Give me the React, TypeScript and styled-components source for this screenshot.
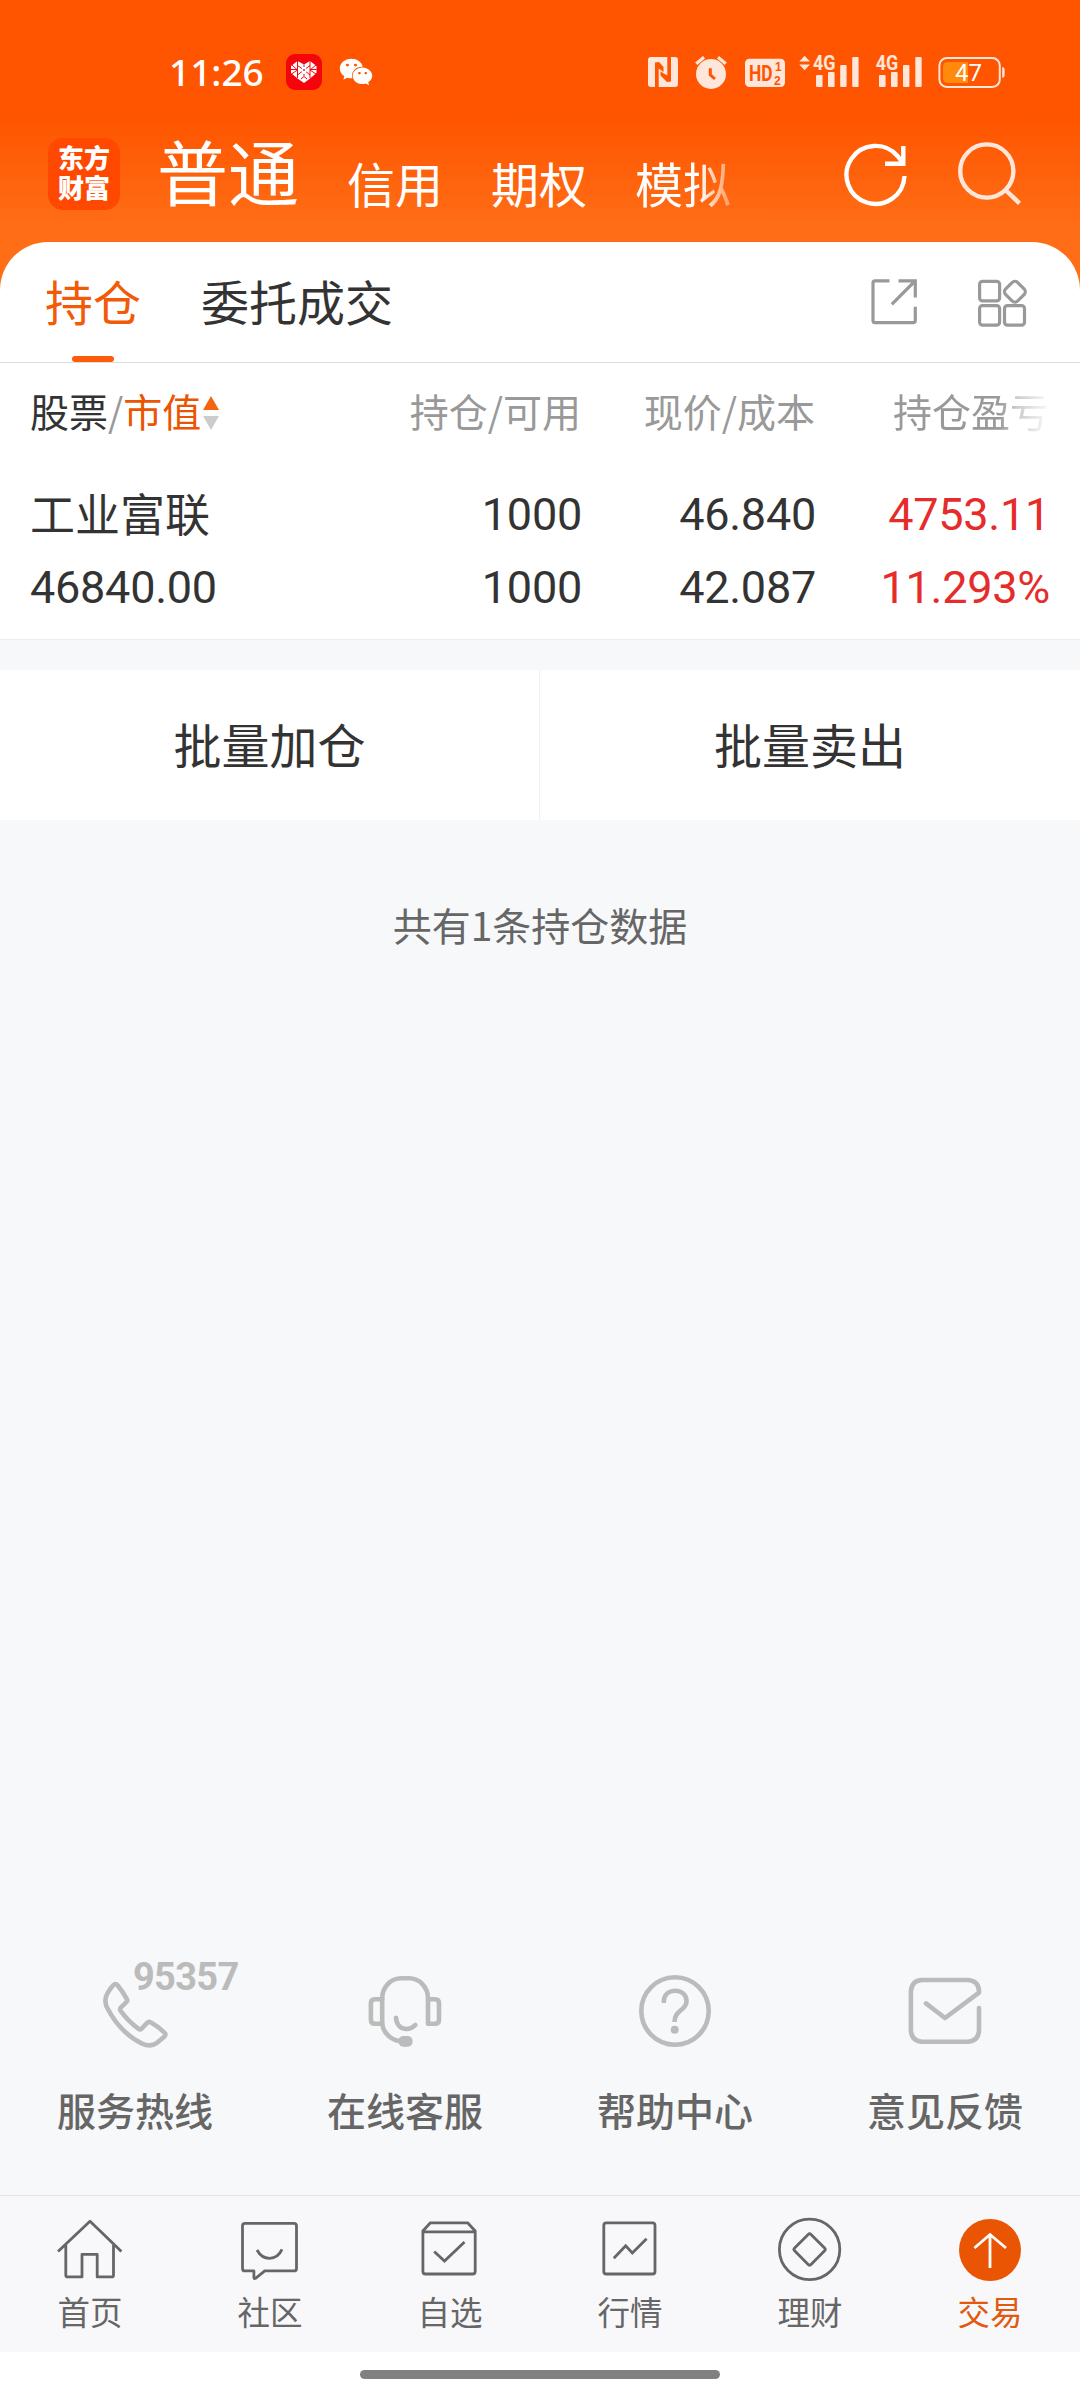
import React from "react";
import styled, { createGlobalStyle } from "styled-components";
import { FaWeixin } from "react-icons/fa";

const CJK = `"Noto Sans CJK SC", "Noto Sans", sans-serif`;
const LATIN = `Roboto, "Noto Sans CJK SC", sans-serif`;

const ORANGE = "#ea5504";
const PALE = "#ffe6da";

const GlobalStyle = createGlobalStyle`
  * { box-sizing: border-box; }
  body { margin: 0; background: #fff; }
  svg { display: block; flex: none; }
`;

const Screen = styled.div`
  width: 1080px;
  height: 2400px;
  overflow: hidden;
  display: flex;
  flex-direction: column;
  font-family: ${CJK};
  color: #333;
  background: linear-gradient(#ff5500 0, #ff5500 118px, #ff6d16 225px, #ff6d16 300px) 0 0 / 100% 300px no-repeat, #f7f8fa;
`;

/* ---------- status bar ---------- */

const StatusBar = styled.div`
  height: 120px;
  padding: 24px 75px 0 169px;
  display: flex;
  align-items: center;
`;

const Clock = styled.span`
  width: 117px;
  font: 500 37px/50px "Noto Sans", sans-serif;
  color: #fff;
`;

const StatusSpacer = styled.div`
  flex: 1;
`;

const WeChat = styled(FaWeixin)`
  width: 34px;
  height: 32px;
  margin-left: 17px;
  color: #fff;
`;

const ShopIcon = () => (
  <svg width="36" height="36" viewBox="0 0 36 36">
    <rect width="36" height="36" rx="9" fill="#f5040c" />
    <path d="M5 12 L11.5 7 L18 10.5 L24 7 L30.5 12 V19 L24 24.5 L18 29 L11.5 24.5 L5 19Z" fill="#fff" />
    <path
      d="M11.5 7V24 M24 7V24 M18 10.5V13 M18 20V22 M5 15.5H11.5 M24 15.5H30.5 M6 11L11.5 16L5.5 20 M30 11L24 16L30 20 M11.5 11.5L18 16L24 11.5 M11.5 21L18 16L24 21 M15 25L18 22.5L21 25"
      stroke="#f5040c"
      strokeWidth="1"
      fill="none"
    />
    <circle cx="18" cy="16" r="2.6" fill="#fff" />
    <circle cx="18" cy="16" r="0.9" fill="#f5040c" />
  </svg>
);

const StatusGlyphs = () => (
  <svg width="360" height="40" viewBox="645 52 360 40" fill={PALE}>
    <rect x="648" y="57" width="30" height="30" rx="3" />
    <path d="M655 87V62.5L659 62L663.5 67V72L658.7 68.5V87Z M671 57V81.5L667 82L660.5 75.5V71.5L667.3 75.5V57Z" fill="#ff5500" />

    <circle cx="711" cy="74" r="15" />
    <path d="M696.2 63.8L704 57.2 M725.8 63.8L718 57.2" stroke={PALE} strokeWidth="3.2" fill="none" />
    <path d="M710.3 68.3V74.8L715 79" stroke="#ff5500" strokeWidth="3" fill="none" />

    <rect x="745" y="58.7" width="40" height="28.3" rx="4.5" />
    <text x="749" y="81.3" fontFamily="Roboto, sans-serif" fontWeight="700" fontSize="22" textLength="23.5" lengthAdjust="spacingAndGlyphs" fill="#ff5500">HD</text>
    <text x="775" y="71" fontFamily="Liberation Sans, sans-serif" fontWeight="700" fontSize="12" fill="#ff5500">1</text>
    <text x="774" y="84.6" fontFamily="Liberation Sans, sans-serif" fontWeight="700" fontSize="12" fill="#ff5500">2</text>

    <path d="M799.3 61.5L804.6 55.7L810 61.5Z M799.3 64.5L804.6 70.3L810 64.5Z" />
    <text x="813" y="70.3" fontFamily="Roboto, sans-serif" fontWeight="700" fontSize="20" textLength="22.5" lengthAdjust="spacingAndGlyphs">4G</text>
    <rect x="816" y="75" width="6.6" height="12" rx="1" />
    <rect x="828" y="72" width="6.6" height="15" rx="1" />
    <rect x="840.2" y="65" width="6.4" height="22" rx="1" />
    <rect x="852.2" y="57" width="6.4" height="30" rx="1" />

    <text x="875.8" y="70.3" fontFamily="Roboto, sans-serif" fontWeight="700" fontSize="20" textLength="22.5" lengthAdjust="spacingAndGlyphs">4G</text>
    <rect x="879" y="75" width="6.6" height="12" rx="1" />
    <rect x="891" y="72" width="6.6" height="15" rx="1" />
    <rect x="903" y="65" width="6.4" height="22" rx="1" />
    <rect x="915.3" y="57" width="6.4" height="30" rx="1" />

    <rect x="939.4" y="58" width="60.4" height="29" rx="7.5" fill="none" stroke={PALE} strokeWidth="2" />
    <path d="M948 62H968V83H948Q943 83 943 78V67Q943 62 948 62Z" fill="#ff8a0c" />
    <path d="M1002.2 67Q1004.6 67 1004.6 69.5V75.2Q1004.6 77.7 1002.2 77.7Z" />
    <text x="955" y="81" fontFamily="Roboto, sans-serif" fontSize="24" fill="#fff">47</text>
  </svg>
);

/* ---------- title bar ---------- */

const TitleBar = styled.header`
  height: 122px;
  padding: 18px 48px 0;
  display: flex;
  align-items: flex-start;
`;

const Logo = styled.div`
  width: 72px;
  height: 72px;
  border-radius: 15px;
  background: #ff4800;
  color: #fff;
  font-weight: 900;
  font-size: 26px;
  line-height: 30px;
  padding: 4px 0 0 10px;
  white-space: pre-line;
`;

const Accounts = styled.nav`
  flex: 1;
  display: flex;
  align-items: flex-end;
  gap: 48px;
  height: 71px;
  margin-left: 37px;
  color: #fff;
  white-space: nowrap;
`;

const Account = styled.span<{ $active?: boolean; $fade?: boolean }>`
  font-size: ${(p) => (p.$active ? 71 : 48)}px;
  line-height: ${(p) => (p.$active ? 80 : 54)}px;
  ${(p) => p.$fade && "mask-image: linear-gradient(90deg, #000 66%, transparent 118%);"}
`;

const TitleActions = styled.div`
  display: flex;
  gap: 43px;
  padding-right: 8px;
`;

const RefreshIcon = () => (
  <svg width="70" height="72" viewBox="841 138 70 72" fill="none" stroke="#fff" strokeWidth="4.4">
    <path d="M904.5 176 A29 29 0 1 1 897.5 156 L903 163" />
    <path d="M885 163.8H903.3V146" />
  </svg>
);

const SearchIcon = () => (
  <svg width="70" height="72" viewBox="954 138 70 72" fill="none" stroke={PALE} strokeWidth="4.4">
    <circle cx="986.8" cy="171" r="26.6" />
    <path d="M1005.5 190L1019.5 203.3" />
  </svg>
);

/* ---------- holdings panel ---------- */

const Panel = styled.section`
  background: #fff;
  border-radius: 48px 48px 0 0;
  border-bottom: 1px solid #ececee;
  height: 398px;
`;

const TabRow = styled.div`
  height: 121px;
  padding: 0 45px;
  display: flex;
  align-items: flex-start;
  border-bottom: 1px solid #dedede;
`;

const Tab = styled.span<{ $active?: boolean }>`
  position: relative;
  height: 120px;
  margin-right: 60px;
  font-size: 48px;
  line-height: 117px;
  color: ${(p) => (p.$active ? "#f25a08" : "#333")};
  ${(p) =>
    p.$active &&
    `&::after {
      content: "";
      position: absolute;
      left: 27px;
      bottom: 0;
      width: 42px;
      height: 6px;
      border-radius: 3px;
      background: #ff5a0a;
    }`}
`;

const TabTools = styled.div`
  margin-left: auto;
  margin-right: 1px;
  display: flex;
  gap: 46px;
  padding-top: 30px;
`;

const ExportIcon = () => (
  <svg width="60" height="60" viewBox="0 0 60 60" fill="none" stroke="#999" strokeWidth="3.2">
    <path d="M25.5 8.8H11Q9 8.8 9 10.8V48.6Q9 50.6 11 50.6H49.3Q51.3 50.6 51.3 48.6V34.7" />
    <path d="M34.5 8.8H51.3V25.4 M27.8 32.4L51 9" />
  </svg>
);

const GridIcon = () => (
  <svg width="64" height="60" viewBox="0 0 64 60" fill="none" stroke="#999" strokeWidth="3.2">
    <rect x="9.6" y="9.3" width="20" height="19.6" rx="3" />
    <rect x="9.6" y="33.6" width="20" height="19.6" rx="3" />
    <rect x="34.5" y="33.6" width="20" height="19.6" rx="3" />
    <rect x="36.4" y="11.2" width="17" height="17" rx="4" transform="rotate(45 44.9 19.7)" />
  </svg>
);

const Holdings = styled.div`
  display: grid;
  grid-template-columns: 300px 252px 234px 234px;
  grid-template-rows: 96px;
  padding: 0 30px;
  text-align: right;
  white-space: nowrap;
`;

const HeadCell = styled.span<{ $fade?: boolean }>`
  padding-right: 1px;
  font-size: 39px;
  line-height: 94px;
  color: #999;
  ${(p) => p.$fade && "mask-image: linear-gradient(90deg, #000 78%, rgba(0,0,0,.5) 86%, transparent 101%);"}
`;

const SortCell = styled(HeadCell)`
  display: flex;
  align-items: flex-start;

  b { font-weight: 400; color: #333; }
  em { font-style: normal; color: ${ORANGE}; }
  svg { margin: 32px 0 0 1px; }
`;

const SortArrows = () => (
  <svg width="18" height="36" viewBox="0 0 18 36">
    <path d="M9 1L17 15H1Z" fill="#f56410" />
    <path d="M9 35L17 21H1Z" fill="#ccc" />
  </svg>
);

const StockCell = styled.div<{ $left?: boolean; $gain?: boolean }>`
  display: flex;
  flex-direction: column;
  padding-top: 19px;
  text-align: ${(p) => (p.$left ? "left" : "right")};
  font-family: ${LATIN};
  font-size: 45px;
  letter-spacing: -0.25px;
  line-height: 73px;
  color: ${(p) => (p.$gain ? "#e62b2b" : "#333")};
`;

const Name = styled.span`
  font-family: ${CJK};
  letter-spacing: 0;
  line-height: 69px;
  padding-bottom: 4px;
`;

const BatchRow = styled.div`
  margin-top: 30px;
  height: 150px;
  display: grid;
  grid-template-columns: 540px 540px;
  background: #fff;
`;

const BatchButton = styled.div`
  font-size: 48px;
  line-height: 147px;
  text-align: center;
  &:first-child { border-right: 1px solid #f0f0f2; }
`;

const Summary = styled.p`
  flex: 1;
  margin: 0;
  padding-top: 74px;
  font-size: 39px;
  line-height: 60px;
  text-align: center;
  color: #666;
`;

/* ---------- service shortcuts ---------- */

const Services = styled.div`
  display: grid;
  grid-template-columns: repeat(4, 1fr);
  height: 225px;
`;

const Service = styled.div`
  display: flex;
  flex-direction: column;
  align-items: center;
  font-size: 39px;
  font-weight: 500;
  line-height: 60px;
  color: #666;
`;

const ServiceIcon = styled.div`
  position: relative;
  margin-bottom: 29px;
`;

const HotlineNumber = styled.span`
  position: absolute;
  left: 38px;
  top: -13px;
  font: 700 38px/40px Roboto, sans-serif;
  letter-spacing: -0.7px;
  color: #bbb;
`;

const ServiceSvg = ({ children }: { children: React.ReactNode }) => (
  <svg width="80" height="80" viewBox="0 0 80 80" fill="none" stroke="#bbb" strokeWidth="4.6" strokeLinecap="round" strokeLinejoin="round">
    {children}
  </svg>
);

const services = [
  {
    label: "服务热线",
    badge: "95357",
    art: (
      <path d="M18.2 15.3Q20.4 12.8 22.6 15.3Q28 22 32 29.3Q32.6 30.8 31.6 31.8L26 37.3Q24.4 39 25.6 40.8Q33.5 51.5 43.6 58.8Q45.2 60 46.6 58.6L52.4 52.7Q53.8 51.3 55.6 52.2Q63.5 56.5 69.6 62.8Q71.2 64.6 69.5 66.4L62 72.8Q55.5 77.5 47 73.6Q24.5 62.5 11.5 36.5Q9 30 12.2 23.8Q14.5 19.5 18.2 15.3Z" />
    ),
  },
  {
    label: "在线客服",
    art: (
      <>
        <path d="M17.2 53.7H9.9Q5.9 53.7 5.9 49.7V33.3Q5.9 29.3 9.9 29.3H17.2" />
        <path d="M63 29.3H70Q74 29.3 74 33.3V49.7Q74 53.7 70 53.7H63V28.5C63 17 54.5 8.3 44 8.3H36.2C25.7 8.3 17.2 17 17.2 28.5V53.5C17.8 62 25.5 70.3 35 71" />
        <path d="M31 47.7C31.3 54.5 35.5 59 41.5 59Q46.5 59 50.3 55" />
        <rect x="33.4" y="66" width="14.2" height="10.7" rx="5" fill="#bbb" stroke="none" />
      </>
    ),
  },
  {
    label: "帮助中心",
    art: (
      <>
        <circle cx="40" cy="41" r="33.7" />
        <path strokeLinecap="butt" d="M28.8 33V31.8C28.8 25 33.5 20.7 40.3 20.7C47 20.7 51.5 25 51.5 31.2C51.5 40.5 39.5 40 39.5 52" />
        <circle cx="39.7" cy="59.7" r="4" fill="#bbb" stroke="none" />
      </>
    ),
  },
  {
    label: "意见反馈",
    art: <path d="M74 38V60.7Q73 71.2 63 71.7H17Q6.9 71.2 5.9 60.7V21Q6.9 10.5 17 10H63Q73.5 10.7 74 21V22.6L40 48L21 33.4" />,
  },
];

/* ---------- bottom navigation ---------- */

const BottomNav = styled.nav`
  display: grid;
  grid-template-columns: repeat(6, 1fr);
  height: 157px;
  padding-top: 18px;
  background: #f8f8fa;
  border-top: 1px solid #dfe3e4;
`;

const NavItem = styled.div<{ $active?: boolean }>`
  display: flex;
  flex-direction: column;
  align-items: center;
  font-size: 32.5px;
  line-height: 50px;
  color: ${(p) => (p.$active ? "#e2590f" : "#666")};
`;

const NavSvg = ({ children }: { children: React.ReactNode }) => (
  <svg width="72" height="72" viewBox="0 0 72 72" fill="none" stroke="#666" strokeWidth="2.8" strokeLinejoin="round">
    {children}
  </svg>
);

const navItems = [
  {
    label: "首页",
    art: (
      <path d="M4 37.6L36 7.2L67.4 37.6 M11.8 31V61.2Q11.8 62.9 13.6 62.9H28V40.3H43.2V62.9H57.8Q59.5 62.9 59.5 61.2V31" />
    ),
  },
  {
    label: "社区",
    art: (
      <>
        <path d="M11 9.3H60Q62.5 9.3 62.5 11.8V54.4Q62.5 56.9 60 56.9H30.8L21.5 64.3Q19.9 65 19.9 63.4V56.9H11Q8.5 56.9 8.5 54.4V11.8Q8.5 9.3 11 9.3Z" />
        <path d="M23 36Q27.5 44.3 35.5 44.3Q44 44.3 48 35.4" />
      </>
    ),
  },
  {
    label: "自选",
    art: (
      <>
        <path d="M8.9 17.8H61.2V57.2Q61.2 60 58.6 60H11.5Q8.9 60 8.9 57.2V17L16.4 8.8H53.6L61.2 17V18" />
        <path d="M20.2 37.5L30.5 47L50.5 28" strokeLinejoin="miter" />
      </>
    ),
  },
  {
    label: "行情",
    art: (
      <>
        <rect x="9.8" y="8.8" width="51.2" height="51.2" rx="2.5" />
        <path d="M19.8 44.2L31.7 31.9L38.3 38.9L52.6 24.8" strokeLinejoin="miter" />
      </>
    ),
  },
  {
    label: "理财",
    art: (
      <>
        <circle cx="35.6" cy="35.4" r="30.2" />
        <rect x="24" y="23.8" width="23.2" height="23.2" rx="2" transform="rotate(45 35.6 35.4)" />
      </>
    ),
  },
  {
    label: "交易",
    active: true,
    art: (
      <>
        <circle cx="36" cy="36" r="31" fill={ORANGE} stroke="none" />
        <path d="M36 54V20.5 M20.4 34L36 20.5L52 34" stroke="#fff" strokeLinejoin="miter" />
      </>
    ),
  },
];

const GestureArea = styled.div`
  height: 48px;
  padding-top: 18px;
  background: #fff;
`;

const GestureBar = styled.div`
  width: 360px;
  height: 9px;
  margin: 0 auto;
  border-radius: 5px;
  background: #808080;
`;

export default function App() {
  return (
    <Screen>
      <GlobalStyle />
      <StatusBar>
        <Clock>11:26</Clock>
        <ShopIcon />
        <WeChat />
        <StatusSpacer />
        <StatusGlyphs />
      </StatusBar>

      <TitleBar>
        <Logo>{"东方\n财富"}</Logo>
        <Accounts>
          <Account $active>普通</Account>
          <Account>信用</Account>
          <Account>期权</Account>
          <Account $fade>模拟</Account>
        </Accounts>
        <TitleActions>
          <RefreshIcon />
          <SearchIcon />
        </TitleActions>
      </TitleBar>

      <Panel>
        <TabRow>
          <Tab $active>持仓</Tab>
          <Tab>委托成交</Tab>
          <TabTools>
            <ExportIcon />
            <GridIcon />
          </TabTools>
        </TabRow>
        <Holdings>
          <SortCell>
            <b>股票</b>/<em>市值</em>
            <SortArrows />
          </SortCell>
          <HeadCell>持仓/可用</HeadCell>
          <HeadCell>现价/成本</HeadCell>
          <HeadCell $fade>持仓盈亏</HeadCell>
          <StockCell $left>
            <Name>工业富联</Name>
            <span>46840.00</span>
          </StockCell>
          <StockCell>
            <span>1000</span>
            <span>1000</span>
          </StockCell>
          <StockCell>
            <span>46.840</span>
            <span>42.087</span>
          </StockCell>
          <StockCell $gain>
            <span>4753.11</span>
            <span>11.293%</span>
          </StockCell>
        </Holdings>
      </Panel>

      <BatchRow>
        <BatchButton>批量加仓</BatchButton>
        <BatchButton>批量卖出</BatchButton>
      </BatchRow>
      <Summary>共有1条持仓数据</Summary>

      <Services>
        {services.map((s) => (
          <Service key={s.label}>
            <ServiceIcon>
              <ServiceSvg>{s.art}</ServiceSvg>
              {s.badge && <HotlineNumber>{s.badge}</HotlineNumber>}
            </ServiceIcon>
            {s.label}
          </Service>
        ))}
      </Services>

      <BottomNav>
        {navItems.map((n) => (
          <NavItem key={n.label} $active={n.active}>
            <NavSvg>{n.art}</NavSvg>
            {n.label}
          </NavItem>
        ))}
      </BottomNav>
      <GestureArea>
        <GestureBar />
      </GestureArea>
    </Screen>
  );
}
